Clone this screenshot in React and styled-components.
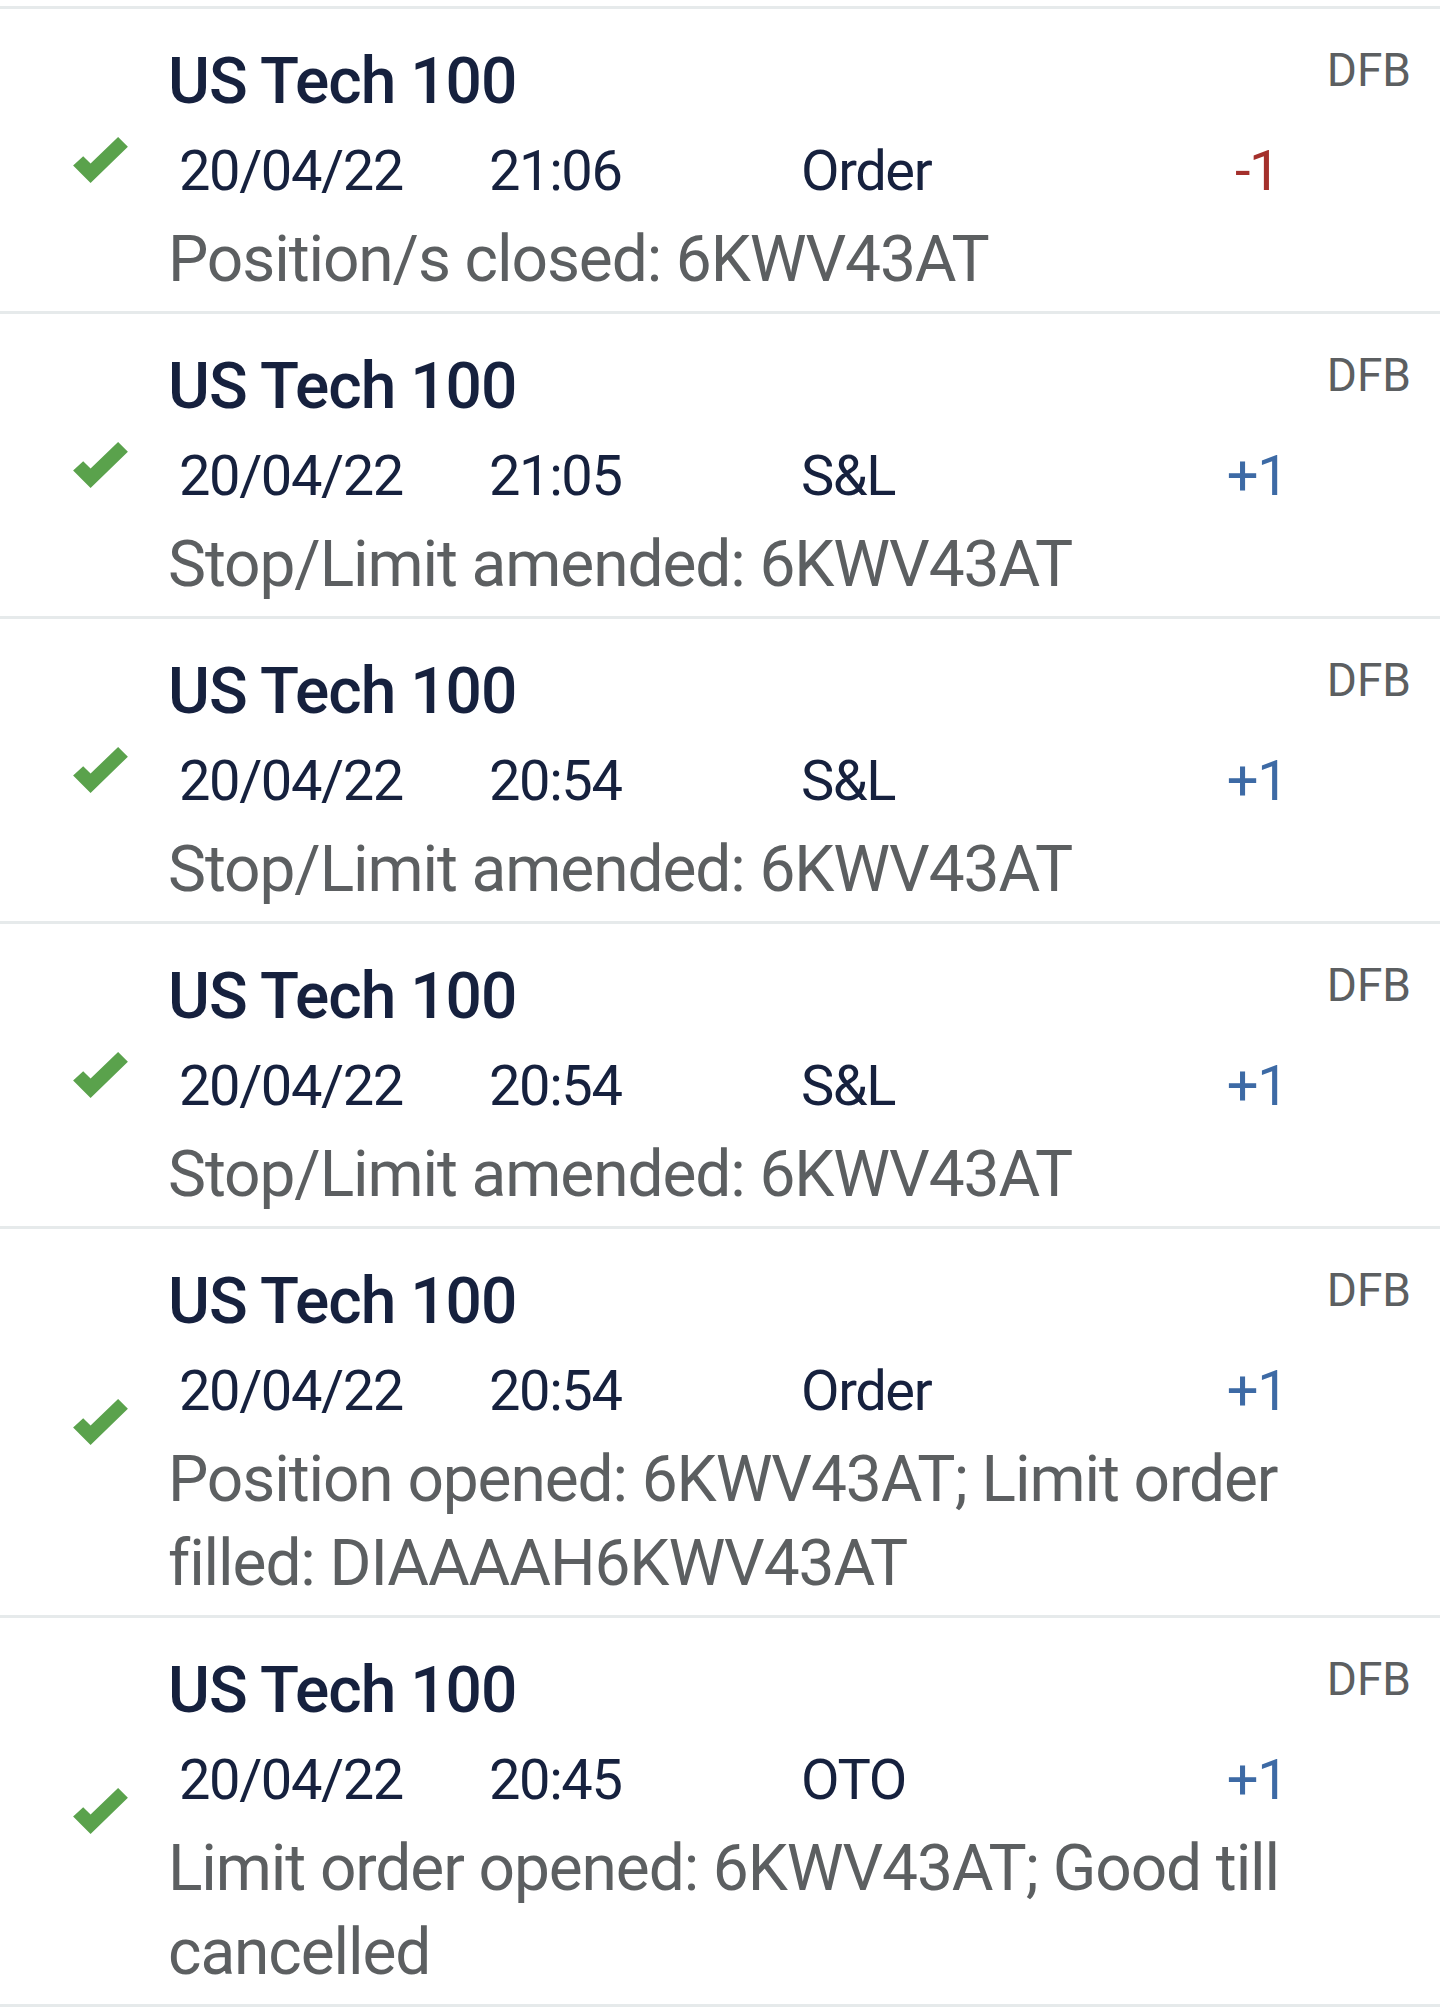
import React from "react";
import styled, { createGlobalStyle } from "styled-components";

const GlobalStyle = createGlobalStyle`
  html, body {
    margin: 0;
    padding: 0;
    background: #ffffff;
  }
  body {
    font-family: Roboto, "Noto Sans", "Liberation Sans", sans-serif;
    -webkit-font-smoothing: antialiased;
  }
`;

const Page = styled.div`
  padding-top: 6px;
  background: #ffffff;
`;

const List = styled.ul`
  list-style: none;
  margin: 0;
  padding: 0;
  border-bottom: 3px solid #e6eaeb;
`;

const Row = styled.li`
  display: grid;
  grid-template-columns: 168px 1fr auto;
  padding-right: 29px;
  border-top: 3px solid #e6eaeb;
`;

const CheckCell = styled.div`
  align-self: center;
  padding-left: 73px;
  display: flex;
  align-items: center;
`;

const Content = styled.div`
  padding: 31px 0 9px 0;
  min-width: 0;
`;

const Title = styled.div`
  font-size: 64px;
  line-height: 84px;
  font-weight: 500;
  letter-spacing: -1px;
  color: #16213e;
  white-space: nowrap;
`;

const Meta = styled.div`
  margin-top: 5px;
  padding-left: 11px;
  display: grid;
  grid-template-columns: 310px 312px 400px 112px;
  font-size: 56px;
  line-height: 84px;
  letter-spacing: -1.4px;
  color: #16213e;
`;

const Amount = styled.span`
  text-align: center;
  color: ${(p) => (p.$negative ? "#a4302c" : "#3d6aa5")};
`;

const Description = styled.div`
  margin-top: 5px;
  font-size: 64px;
  line-height: 84px;
  letter-spacing: -1.1px;
  color: #5c5f61;
`;

const Side = styled.div`
  padding-top: 31px;
  font-size: 46px;
  line-height: 60px;
  color: #5c5f61;
`;

const CheckIcon = () => (
  <svg width="55" height="46" viewBox="0 0 54.3 45.6" aria-hidden="true">
    <polygon
      points="0,28.3 10,19 17.3,26.3 44.6,0 54.3,9.6 17.3,45.6"
      fill="#5aa24c"
    />
  </svg>
);

const rows = [
  { date: "20/04/22", time: "21:06", type: "Order", amount: "-1", desc: "Position/s closed: 6KWV43AT" },
  { date: "20/04/22", time: "21:05", type: "S&L", amount: "+1", desc: "Stop/Limit amended: 6KWV43AT" },
  { date: "20/04/22", time: "20:54", type: "S&L", amount: "+1", desc: "Stop/Limit amended: 6KWV43AT" },
  { date: "20/04/22", time: "20:54", type: "S&L", amount: "+1", desc: "Stop/Limit amended: 6KWV43AT" },
  {
    date: "20/04/22",
    time: "20:54",
    type: "Order",
    amount: "+1",
    desc: "Position opened: 6KWV43AT; Limit order filled: DIAAAAH6KWV43AT",
  },
  {
    date: "20/04/22",
    time: "20:45",
    type: "OTO",
    amount: "+1",
    desc: "Limit order opened: 6KWV43AT; Good till cancelled",
  },
];

export default function App() {
  return (
    <Page>
      <GlobalStyle />
      <List>
        {rows.map((r, i) => (
          <Row key={i}>
            <CheckCell>
              <CheckIcon />
            </CheckCell>
            <Content>
              <Title>US Tech 100</Title>
              <Meta>
                <span>{r.date}</span>
                <span>{r.time}</span>
                <span>{r.type}</span>
                <Amount $negative={r.amount.startsWith("-")}>{r.amount}</Amount>
              </Meta>
              <Description>{r.desc}</Description>
            </Content>
            <Side>DFB</Side>
          </Row>
        ))}
      </List>
    </Page>
  );
}
